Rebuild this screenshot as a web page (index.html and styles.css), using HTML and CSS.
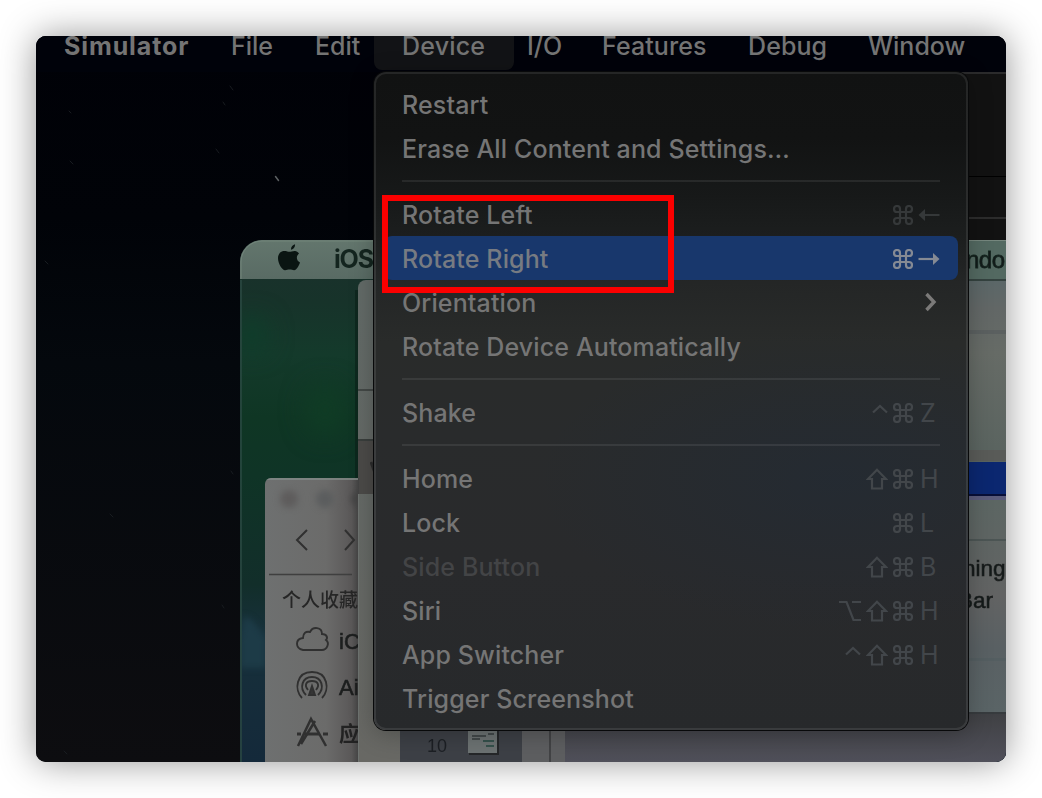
FILE: index.html
```
<!DOCTYPE html>
<html lang="en">
<head>
<meta charset="utf-8">
<title>Simulator – Device menu</title>
<link rel="stylesheet" href="styles.css">
</head>
<body>
<main class="capture">
  <svg class="scene" viewBox="36 36 970 726" aria-hidden="true">
    <defs>
      <linearGradient id="sky" x1="0" y1="0" x2="0" y2="1">
        <stop offset="0" stop-color="#000107"/><stop offset=".25" stop-color="#010308"/>
        <stop offset=".45" stop-color="#04080d"/><stop offset="1" stop-color="#0d0d10"/>
      </linearGradient>
      <linearGradient id="desk" x1="0" y1="0" x2="0" y2="1">
        <stop offset="0" stop-color="#1b302c"/><stop offset=".12" stop-color="#17332a"/>
        <stop offset=".22" stop-color="#143a2b"/><stop offset=".34" stop-color="#0f3624"/>
        <stop offset=".45" stop-color="#0f3426"/>
        <stop offset=".66" stop-color="#122e2a"/><stop offset=".75" stop-color="#17303a"/>
        <stop offset="1" stop-color="#14293a"/>
      </linearGradient>
      <linearGradient id="bar" x1="0" y1="0" x2="0" y2="1">
        <stop offset="0" stop-color="#63766d"/><stop offset="1" stop-color="#596b64"/>
      </linearGradient>
      <linearGradient id="finder" x1="0" y1="0" x2="1" y2="0">
        <stop offset="0" stop-color="#6e7070"/><stop offset=".65" stop-color="#6b6b6a"/>
        <stop offset=".92" stop-color="#5a5858"/><stop offset="1" stop-color="#424242"/>
      </linearGradient>
      <linearGradient id="panel" x1="0" y1="0" x2="0" y2="1">
        <stop offset="0" stop-color="#626a67"/><stop offset="1" stop-color="#686864"/>
      </linearGradient>
      <linearGradient id="right" x1="0" y1="0" x2="0" y2="1">
        <stop offset="0" stop-color="#5b6768"/><stop offset=".15" stop-color="#626766"/>
        <stop offset=".4" stop-color="#666b66"/><stop offset="1" stop-color="#59635f"/>
      </linearGradient>
      <linearGradient id="right2" x1="0" y1="0" x2="0" y2="1">
        <stop offset="0" stop-color="#5c6663"/><stop offset=".45" stop-color="#626363"/>
        <stop offset=".7" stop-color="#596063"/><stop offset="1" stop-color="#5a6466"/>
      </linearGradient>
      <linearGradient id="bottom" x1="0" y1="0" x2="0" y2="1">
        <stop offset="0" stop-color="#3f4043"/><stop offset="1" stop-color="#50505a"/>
      </linearGradient>
      <filter id="soft" x="-20%" y="-20%" width="140%" height="140%" color-interpolation-filters="sRGB"><feGaussianBlur stdDeviation=".7"/></filter>
      <filter id="blur" x="-50%" y="-50%" width="200%" height="200%" color-interpolation-filters="sRGB"><feGaussianBlur stdDeviation="3"/></filter>
      <filter id="haze" x="-80%" y="-80%" width="260%" height="260%" color-interpolation-filters="sRGB"><feGaussianBlur stdDeviation="12"/></filter>
      <clipPath id="finderClip"><path d="M265 762V484a6 6 0 0 1 6-6h88v284z"/></clipPath>
      <clipPath id="deskClip"><rect x="242" y="280" width="116" height="482"/></clipPath>
    </defs>

    <rect x="36" y="36" width="970" height="726" fill="url(#sky)"/>
    <g stroke="#181c20" stroke-linecap="round">
      <path d="M275.500 176.500l3 4" stroke="#5c6062" stroke-width="1.500"/>
      <path d="M230 86l3 4M223 102l2 3M216 149l3 4M70 161l3 3M69 111l2 2M45 261l3 3M231 471l2 3M222 605l2 3M110 514l3 3M64 751l3 3"/>
    </g>

    <!-- window behind the menu, top right -->
    <rect x="960" y="72" width="46" height="170" fill="#121212"/>
    <rect x="960" y="72" width="46" height="2" fill="#2b2b2c"/>
    <rect x="960" y="176" width="46" height="1" fill="#000"/>
    <rect x="960" y="217" width="46" height="2" fill="#2c2c2c"/>

    <!-- simulator screen -->
    <path d="M240 762V262a22 22 0 0 1 22-22H1006V762z" fill="url(#desk)"/>
    <g clip-path="url(#deskClip)">
      <g filter="url(#haze)">
        <ellipse cx="252" cy="335" rx="16" ry="18" fill="#0f3e2b"/>
        <ellipse cx="325" cy="410" rx="20" ry="26" fill="#103c25"/>
      </g>
      <g filter="url(#blur)"><path d="M240 640l4-24 8 4 14 18v30h-26z" fill="#1d3b47"/></g>
    </g>
    <path d="M240 279V262a22 22 0 0 1 22-22H380V279z" fill="url(#bar)"/>
    <path d="M241 279V262a21 21 0 0 1 21-21H380" fill="none" stroke="#72857b"/>
    <path d="M241 280V762" stroke="#2b4a43" stroke-width="1.500"/>
    <g filter="url(#soft)">
      <path transform="translate(277 244)" d="M14 5.800c-.3-2.600 1.700-5 4-5.500.4 2.700-1.800 5.300-4 5.500zM22 9.500c-3 2.300-3 7 1 9-1 3-3.400 7.700-5.900 7.700-1.600 0-2.400-.6-4.500-.6-1.900 0-2.900.6-4.500.6C5 26.200 1 19.300 1 14.200 1 9.600 4 7 7.400 7c2.100 0 3.700.8 5 .8 1.300 0 3.300-.9 5.600-.8 1.400.1 3 .8 4 2.500z" fill="#0a1512"/>
      <text x="334" y="268" class="scene-menu">iOS</text>
    </g>

    <!-- panel partly covered by the menu -->
    <path d="M356.500 290V480" stroke="#0b2119" stroke-width="3" opacity=".65"/>
    <path d="M358 762V288a8 8 0 0 1 8-8h35V762z" fill="url(#panel)"/>
    <rect x="358" y="389" width="20" height="2" fill="#434846"/>
    <rect x="358" y="440" width="20" height="54" fill="#4b4a48"/>
    <rect x="358" y="439" width="20" height="2" fill="#393e3c"/>
    <path d="M371 462l4 11" stroke="#2c2c2c" stroke-width="3" filter="url(#soft)"/>

    <!-- finder window -->
    <g clip-path="url(#finderClip)">
      <rect x="265" y="478" width="94" height="284" fill="url(#finder)"/>
      <path d="M265 479H358" stroke="#858c8a" stroke-width="1.500"/>
      <g filter="url(#blur)"><circle cx="289" cy="499" r="9" fill="#5e5c5c"/><circle cx="325" cy="499" r="9" fill="#5b5d5e"/><circle cx="358" cy="499" r="7" fill="#444"/></g>
      <path d="M269 574.500H352" stroke="#3f3f3f" stroke-width="1.500"/>
      <g filter="url(#soft)" fill="none" stroke="#303030" stroke-width="1.900">
        <path d="M307 530l-10 10 10 10M345 530l9 10-9 10" stroke-width="2"/>
        <path d="M303 650c-8-2-8-11 0-12 0-5 3-7 7-6 3-6 12-5 12 2 5 0 6 4 4 6 4 3 1 10-4 10z"/>
        <path d="M302 698c-8-8-6-26 10-26s18 18 10 26M306 695c-7-7-4-18 6-18s13 11 6 18M308 690c-4-5-2-9 4-9s8 4 4 9"/>
        <path d="M312 686l-3 9h6z" fill="#353535"/>
        <path d="M298 746l13-27 15 27M315 721l-14 23" stroke-width="2.500"/><path d="M297 734h4M304 734h15M323 734h5" stroke-width="3"/>
      </g>
      <g filter="url(#soft)">
        <text x="282" y="607" class="scene-cjk">个人收藏</text>
        <text x="339" y="649" class="scene-label">iC</text>
        <text x="339" y="695" class="scene-label">Ai</text>
        <text x="339" y="741" class="scene-cjk scene-cjk-strong">应</text>
      </g>
    </g>
    <path d="M358.500 494V762" stroke="#6e7370"/>

    <!-- list strip under the menu -->
    <rect x="400" y="720" width="122" height="42" fill="#3d4046"/>
    <g filter="url(#soft)">
      <text x="427" y="752" class="scene-number">10</text>
      <path d="M469 731h30v24h-30z" fill="#252729"/>
      <path d="M468 731h29v22h-29z" fill="#6c7272"/>
      <path d="M472 736h14M488 734h6M472 739h8" stroke="#43494a" stroke-width="2"/>
      <path d="M483 741h11M486 746h8" stroke="#35514b" stroke-width="2"/>
    </g>
    <rect x="522" y="725" width="44" height="37" fill="#5d5e60"/>
    <path d="M550 725V762" stroke="#424345" stroke-width="2"/>
    <rect x="565" y="712" width="441" height="50" fill="url(#bottom)"/>

    <!-- content to the right of the menu -->
    <rect x="960" y="240" width="46" height="40" fill="#536961"/>
    <rect x="960" y="240" width="46" height="1" fill="#76877e"/>
    <rect x="960" y="279" width="46" height="2" fill="#34423f"/>
    <rect x="960" y="281" width="46" height="181" fill="url(#right)"/>
    <rect x="950" y="330" width="66" height="4" fill="#5b6060" filter="url(#soft)"/>
    <rect x="960" y="450" width="46" height="11" fill="#595b58"/>
    <rect x="960" y="462" width="46" height="34" fill="#0b2770"/>
    <rect x="960" y="494" width="46" height="2" fill="#080f38"/>
    <rect x="960" y="496" width="46" height="4" fill="#5a5b7b"/>
    <rect x="960" y="500" width="46" height="212" fill="url(#right2)"/>
    <rect x="960" y="539" width="46" height="2" fill="#4c5554"/>
    <rect x="960" y="658" width="46" height="3" fill="#545e61"/>
    <rect x="960" y="712" width="46" height="2" fill="#373b3e"/>
    <g filter="url(#soft)">
      <text x="966" y="268" class="scene-menu scene-right">ndo</text>
      <text x="963" y="576" class="scene-label scene-right">ning</text>
      <text x="958" y="608" class="scene-label scene-right">Bar</text>
    </g>
  </svg>

  <svg class="symbols" aria-hidden="true">
    <symbol id="cmd" viewBox="0 0 20 20"><path d="M7 7V4a3 3 0 1 0-3 3h12a3 3 0 1 0-3-3v12a3 3 0 1 0 3-3H4a3 3 0 1 0 3 3z"/></symbol>
    <symbol id="shift" viewBox="0 0 22 22"><path d="M11 1.800L2 11h4v9.500h10V11h4z"/></symbol>
    <symbol id="ctrl" viewBox="0 0 16 20"><path d="M1 9.500L8 3l7 6.500"/></symbol>
    <symbol id="opt" viewBox="0 0 22 20"><path d="M0 1h7.500l7 18H22M13 1h9"/></symbol>
    <symbol id="left" viewBox="0 0 22 20"><path d="M6 10h15.500"/><path class="solid" d="M.5 10l6.500-6v12z"/></symbol>
    <symbol id="right-arrow" viewBox="0 0 22 20"><path d="M.5 10H16"/><path class="solid" d="M21.500 10L15 4v12z"/></symbol>
    <symbol id="chevron" viewBox="0 0 12 20"><path d="M1.500 2l7.500 8-7.500 8"/></symbol>
  </svg>

  <nav class="menubar">
    <span class="bar-item app">Simulator</span>
    <span class="bar-item file">File</span>
    <span class="bar-item edit">Edit</span>
    <span class="bar-item open">Device</span>
    <span class="bar-item io">I/O</span>
    <span class="bar-item features">Features</span>
    <span class="bar-item debug">Debug</span>
    <span class="bar-item">Window</span>
  </nav>

  <section class="menu">
    <div class="item"><span class="label">Restart</span></div>
    <div class="item"><span class="label">Erase All Content and Settings…</span></div>
    <hr>
    <div class="item"><span class="label">Rotate Left</span><span class="keys dim"><svg class="k-cmd"><use href="#cmd"/></svg><svg class="k-arrow"><use href="#left"/></svg></span></div>
    <div class="item selected"><span class="label">Rotate Right</span><span class="keys"><svg class="k-cmd"><use href="#cmd"/></svg><svg class="k-arrow"><use href="#right-arrow"/></svg></span></div>
    <div class="item"><span class="label">Orientation</span><svg class="k-chevron"><use href="#chevron"/></svg></div>
    <div class="item"><span class="label">Rotate Device Automatically</span></div>
    <hr>
    <div class="item"><span class="label">Shake</span><span class="keys"><svg class="k-ctrl"><use href="#ctrl"/></svg><svg class="k-cmd"><use href="#cmd"/></svg><b>Z</b></span></div>
    <hr>
    <div class="item"><span class="label">Home</span><span class="keys"><svg class="k-shift"><use href="#shift"/></svg><svg class="k-cmd"><use href="#cmd"/></svg><b>H</b></span></div>
    <div class="item"><span class="label">Lock</span><span class="keys"><svg class="k-cmd"><use href="#cmd"/></svg><b>L</b></span></div>
    <div class="item disabled"><span class="label">Side Button</span><span class="keys"><svg class="k-shift"><use href="#shift"/></svg><svg class="k-cmd"><use href="#cmd"/></svg><b>B</b></span></div>
    <div class="item"><span class="label">Siri</span><span class="keys"><svg class="k-opt"><use href="#opt"/></svg><svg class="k-shift"><use href="#shift"/></svg><svg class="k-cmd"><use href="#cmd"/></svg><b>H</b></span></div>
    <div class="item"><span class="label">App Switcher</span><span class="keys"><svg class="k-ctrl"><use href="#ctrl"/></svg><svg class="k-shift"><use href="#shift"/></svg><svg class="k-cmd"><use href="#cmd"/></svg><b>H</b></span></div>
    <div class="item"><span class="label">Trigger Screenshot</span></div>
  </section>

  <div class="marker"></div>
</main>
</body>
</html>
```
FILE: styles.css
```
* { box-sizing: border-box; }
body {
  margin: 0;
  padding: 36px;
  width: 1042px;
  height: 798px;
  background: #fff;
  overflow: hidden;
  font-family: Inter, "Liberation Sans", sans-serif;
}
.capture {
  position: relative;
  width: 970px;
  height: 726px;
  border-radius: 10px;
  overflow: hidden;
  background: #010308;
  box-shadow: 0 0 36px rgba(0, 0, 0, .42);
}
.scene { position: absolute; inset: 0; width: 970px; height: 726px; }
.symbols { position: absolute; width: 0; height: 0; }
.scene-menu { font: 700 25px Inter, sans-serif; fill: #14251f; letter-spacing: -1.2px; }
.scene-label { font: 500 22px "Liberation Sans", sans-serif; fill: #1c1e1e; stroke: #1c1e1e; stroke-width: .6px; }
.scene-right { font-family: "Liberation Sans", sans-serif; font-size: 24px; fill: #131a19; }
.scene-menu.scene-right { font-weight: 400; letter-spacing: -.5px; stroke: #14251f; stroke-width: .8px; }
.scene-label.scene-right { font-size: 22.5px; }
.scene-cjk { font: 500 19px "Noto Sans CJK SC", sans-serif; fill: #262626; }
.scene-cjk-strong { font-size: 21px; font-weight: 700; fill: #222; }
.scene-number { font: 18px "Liberation Sans", sans-serif; fill: #1c1f24; }

.menubar {
  position: relative;
  display: flex;
  gap: 42px;
  height: 36px;
  padding-left: 28px;
  background: #00020a;
  color: #747474;
  font-size: 25px;
  font-weight: 500;
  line-height: 20px;
  white-space: nowrap;
}
.bar-item { flex: none; height: 34px; }
.app { width: 125px; font-weight: 700; letter-spacing: .9px; }
.file { width: 42px; }
.edit { width: 45px; }
.open {
  width: 140px;
  margin: 0 -28px;
  padding-left: 28px;
  border-radius: 0 0 8px 8px;
  background: #121316;
  letter-spacing: .2px;
}
.io { width: 33px; margin-left: -1px; }
.features { width: 104px; letter-spacing: .1px; }
.debug { width: 78px; letter-spacing: .1px; }

.menu {
  position: relative;
  width: 594px;
  height: 658px;
  margin-left: 338px;
  padding: 8px;
  border: 2px solid rgba(255, 255, 255, .085);
  border-radius: 12px;
  box-shadow: 0 0 0 1px #08090a, 0 4px 24px rgba(0, 0, 0, .25);
  color: #757575;
  background:
    radial-gradient(ellipse 300px 150px at 78% 62%, rgba(30, 42, 58, .42), transparent),
    linear-gradient(#111212 0%, #121313 10%, #171919 19%, #1c1e1e 25%, #242626 32%, #292b2a 41%, #292b2c 55%, #292a2c 75%, #27292b 100%);
  background-origin: border-box;
}
.item {
  display: flex;
  align-items: center;
  justify-content: space-between;
  height: 44px;
  padding: 0 18px;
  border-radius: 8px;
  font-size: 25px;
  font-weight: 500;
  letter-spacing: .13px;
  line-height: 42px;
  white-space: nowrap;
}
.label, .keys b { padding-top: 2px; }
.menu hr { height: 2px; margin: 10px 18px; border: 0; background: rgba(255, 255, 255, .08); }
.selected { background: #18376c; color: #777b82; }
.disabled { color: #434446; }
.keys { display: flex; align-items: center; gap: 5px; color: #42464a; }
.keys.dim { color: #353839; }
.selected .keys { color: #858a94; }
.keys svg, .k-chevron { fill: none; stroke: currentColor; stroke-width: 2.200; }
.solid { fill: currentColor; stroke: none; }
.k-cmd { width: 20px; height: 20px; }
.k-shift { width: 22px; height: 22px; }
.k-ctrl { width: 16px; height: 20px; }
.k-opt { width: 22px; height: 20px; }
.k-arrow { width: 22px; height: 20px; }
.keys svg { position: relative; top: .5px; }
.item .k-chevron { width: 12px; height: 20px; margin-right: 3px; stroke-width: 3.400; color: #7b7a79; }
.keys b { width: 22px; padding-left: 2px; font-weight: 400; }

.marker {
  position: absolute;
  left: 346px;
  top: 159px;
  width: 292px;
  height: 98px;
  border: 6px solid #fb0000;
}
```
